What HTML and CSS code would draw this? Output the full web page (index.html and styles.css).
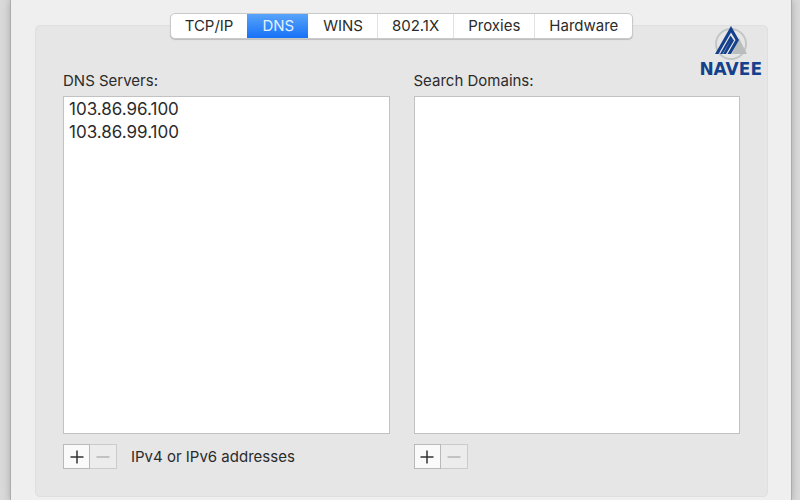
FILE: index.html
```html
<!DOCTYPE html>
<html lang="en">
<head>
<meta charset="utf-8">
<meta name="viewport" content="width=device-width, initial-scale=1">
<title>Network – DNS</title>
<link rel="stylesheet" href="styles.css">
</head>
<body>
<main class="window">
  <section class="panel">
    <div class="tabs" role="tablist" aria-label="Network settings">
      <button class="tab" type="button" role="tab" aria-selected="false">TCP/IP</button>
      <button class="tab selected" type="button" role="tab" aria-selected="true">DNS</button>
      <button class="tab" type="button" role="tab" aria-selected="false">WINS</button>
      <button class="tab" type="button" role="tab" aria-selected="false">802.1X</button>
      <button class="tab" type="button" role="tab" aria-selected="false">Proxies</button>
      <button class="tab" type="button" role="tab" aria-selected="false">Hardware</button>
    </div>
    <div class="columns">
      <div class="column">
        <h2 class="label" id="dns-label">DNS Servers:</h2>
        <ul class="list" aria-labelledby="dns-label">
          <li>103.86.96.100</li>
          <li>103.86.99.100</li>
        </ul>
        <div class="controls">
          <div class="pair">
            <button class="step" type="button" aria-label="Add DNS server"><svg viewBox="0 0 14 14"><path d="M7 0.5V13.5M0.5 7H13.5"/></svg></button>
            <button class="step" type="button" aria-label="Remove DNS server" disabled><svg viewBox="0 0 14 14"><path d="M0.5 7H13.5"/></svg></button>
          </div>
          <span class="hint">IPv4 or IPv6 addresses</span>
        </div>
      </div>
      <div class="column">
        <h2 class="label" id="search-label">Search Domains:</h2>
        <ul class="list" aria-labelledby="search-label"></ul>
        <div class="controls">
          <div class="pair">
            <button class="step" type="button" aria-label="Add search domain"><svg viewBox="0 0 14 14"><path d="M7 0.5V13.5M0.5 7H13.5"/></svg></button>
            <button class="step" type="button" aria-label="Remove search domain" disabled><svg viewBox="0 0 14 14"><path d="M0.5 7H13.5"/></svg></button>
          </div>
        </div>
      </div>
    </div>
  </section>
</main>
<div class="brand">
  <svg class="mark" viewBox="0 0 34 36" aria-hidden="true">
    <circle cx="17" cy="18" r="15" fill="none" stroke="#c3c6c6" stroke-width="2"/>
    <path d="M25 12L33 28H18Z" fill="#b9bdbd"/>
    <path d="M1 28L17 0L25 14L17 28H13.500L21.500 14L17 6.500L4.500 28Z" fill="#15418c"/>
    <path d="M6 28L16.500 9.500L20 14.500L12 28H9L16.500 14.500L8.500 28Z" fill="#15418c"/>
  </svg>
  <span class="name">NAVEE</span>
</div>
</body>
</html>
```

FILE: styles.css
```css
* { box-sizing: border-box; }

body {
  margin: 0;
  background: #dadada;
  color: #2b2b2b;
  font: 15px/22px Inter, "Liberation Sans", sans-serif;
}

.window {
  min-height: 100vh;
  margin: 0 8px 0 10px;
  padding: 25px 23px 4px 24px;
  background: #efefef;
  border: solid #acacac;
  border-width: 0 1px;
  box-shadow: 0 0 8px #a8a8a8;
}

.panel {
  padding: 0 27px 27px 27px;
  background: #e6e6e6;
  border: 1px solid #dfdfdf;
  border-radius: 5px;
}

.tabs {
  display: flex;
  width: fit-content;
  margin: -13px auto 0;
  background: #fff;
  border: 1px solid #c9c9c9;
  border-radius: 5px;
  box-shadow: 0 1px 1px #bcbcbc;
}

.tab {
  height: 24px;
  padding: 0 14px;
  border: 0;
  border-left: 1px solid #e2e2e2;
  background: none;
  color: inherit;
  font: inherit;
}

.tab:first-child { border-left: 0; }

.tab.selected,
.tab.selected + .tab { border-left-color: transparent; }

.tab.selected {
  background: linear-gradient(#57a4fa, #1871f6) border-box;
  color: #e4f1ff;
}

.columns {
  display: grid;
  grid-template-columns: 1fr 1fr;
  gap: 24px;
  margin-top: 31px;
}

.label {
  margin: 0 0 4px;
  font-size: 15px;
  font-weight: 400;
}

.list {
  height: 338px;
  margin: 0;
  padding: 1px 5px;
  background: #fff;
  border: 1px solid #c2c2c2;
  list-style: none;
  font-size: 17px;
  line-height: 23px;
}

.controls {
  display: flex;
  align-items: center;
  gap: 14px;
  margin-top: 10px;
}

.pair { display: flex; }

.step {
  display: grid;
  place-items: center;
  width: 27px;
  height: 25px;
  padding: 0;
  background: #fafafa;
  border: 1px solid #b9b9b9;
  color: #333;
}

.step:disabled {
  background: #ececec;
  border-color: #cbcbcb;
  border-left: 0;
  color: #b5b5b5;
}

.step svg {
  width: 14px;
  height: 14px;
  fill: none;
  stroke: currentColor;
  stroke-width: 1.5;
}

.brand {
  position: absolute;
  top: 26px;
  right: 38px;
  display: flex;
  flex-direction: column;
  align-items: center;
}

.mark {
  width: 34px;
  height: 36px;
}

.name {
  color: #15418c;
  font: bold 17px/14px "DejaVu Sans", sans-serif;
}
```
